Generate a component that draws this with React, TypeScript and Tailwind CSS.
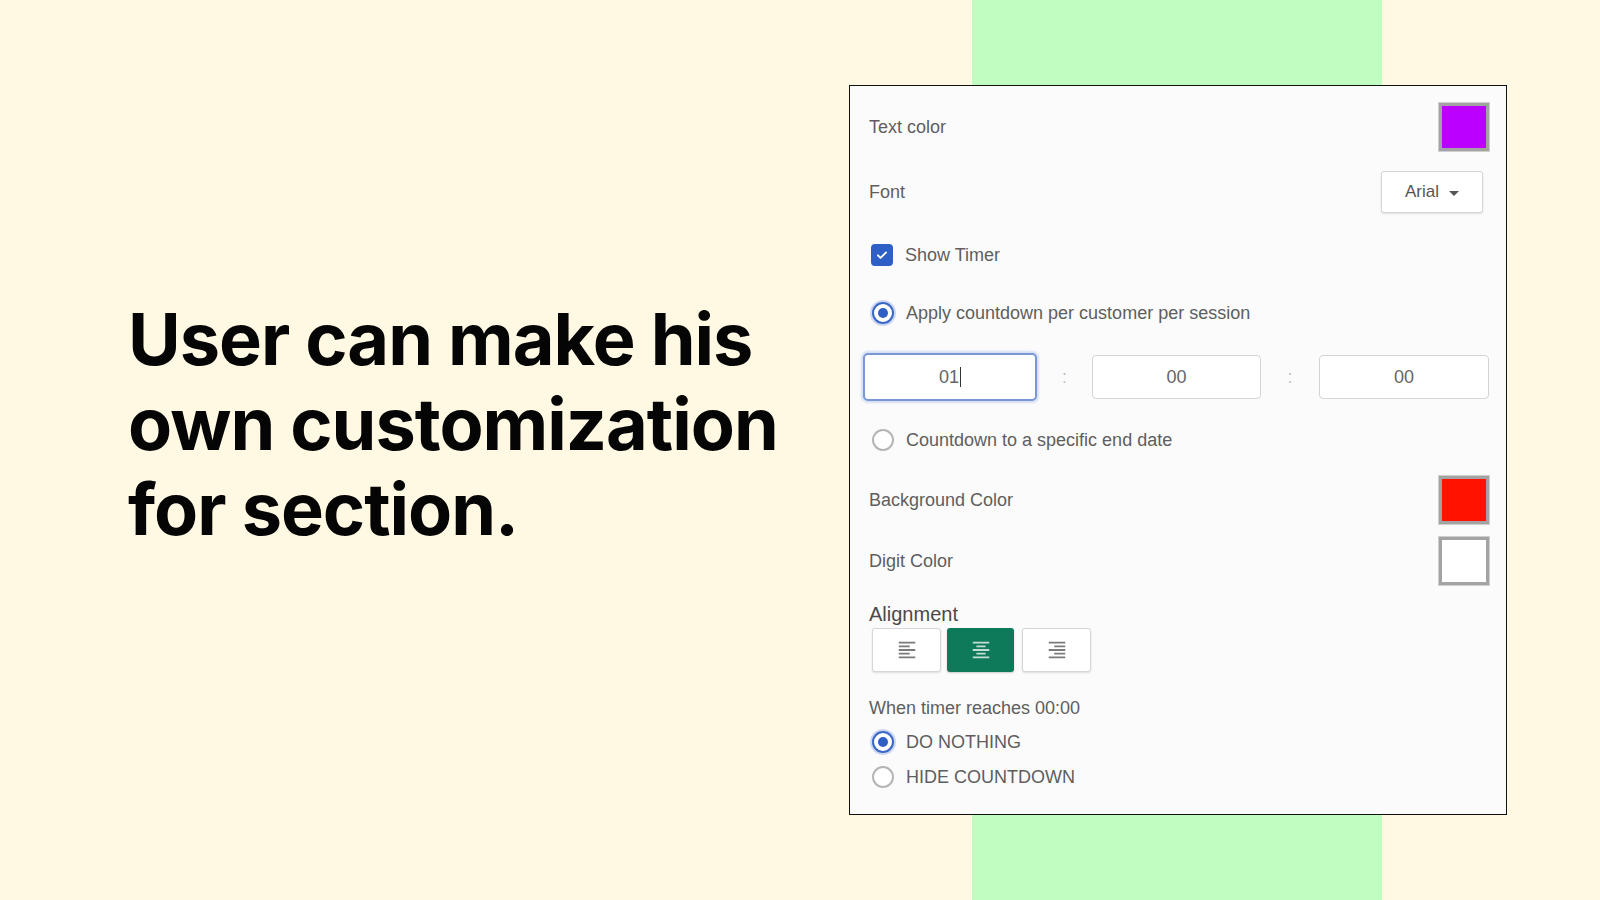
import React from "react";

const sans = "font-['Liberation_Sans',Arial,sans-serif]";

function Radio({ checked }: { checked?: boolean }) {
  if (checked) {
    return (
      <span className="flex h-[22px] w-[22px] shrink-0 items-center justify-center rounded-full border-2 border-[#3a68c8] bg-white shadow-[0_0_0_2px_rgba(120,150,220,0.35)]">
        <span className="h-[10px] w-[10px] rounded-full bg-[#2f5fc4]" />
      </span>
    );
  }
  return <span className="h-[22px] w-[22px] shrink-0 rounded-full border-2 border-[#b5b5b5] bg-white" />;
}

function Swatch({ color }: { color: string }) {
  return (
    <div className="h-[48px] w-[50px] border-[3px] border-[#a3a3a3] shadow-[0_0_0_1px_#cfcfcf]" style={{ backgroundColor: color }} />
  );
}

function AlignIcon({ d, color }: { d: string; color: string }) {
  return (
    <svg width="22" height="22" viewBox="0 0 24 24" fill={color}>
      <path d={d} />
    </svg>
  );
}

const LEFT = "M15 15H3v2h12v-2zm0-8H3v2h12V7zM3 13h18v-2H3v2zm0 8h18v-2H3v2zM3 3v2h18V3H3z";
const CENTER = "M7 15v2h10v-2H7zm-4 6h18v-2H3v2zm0-8h18v-2H3v2zm4-6v2h10V7H7zM3 3v2h18V3H3z";
const RIGHT = "M3 21h18v-2H3v2zm6-4h12v-2H9v2zm-6-4h18v-2H3v2zm6-4h12V7H9v2zM3 3v2h18V3H3z";

export default function App() {
  return (
    <div className="flex h-[900px] w-[1600px] overflow-hidden bg-[linear-gradient(90deg,#fff8e3_972px,#c1fdc0_972px,#c1fdc0_1382px,#fff8e3_1382px)]">
      <div className="w-[849px] shrink-0 pl-[128px] pt-[296px]">
        <h1 className="font-['Inter',sans-serif] text-[72px] font-bold leading-[85px] tracking-[-1px] text-[#050505]">
          User can make his
          <br />
          own customization
          <br />
          for section.
        </h1>
      </div>

      <div className={`mt-[85px] flex h-[730px] w-[658px] shrink-0 flex-col border border-[#111] bg-[#fbfbfb] pl-[19px] pr-[17px] pt-[17px] text-[18px] text-[#5e5e5e] ${sans}`}>
        {/* Text color */}
        <div className="flex h-[48px] items-center justify-between">
          <span>Text color</span>
          <Swatch color="#bb00ff" />
        </div>
        {/* Font */}
        <div className="mt-[20px] flex h-[42px] items-center justify-between">
          <span>Font</span>
          <div className="mr-[6px] flex h-[42px] w-[102px] items-center justify-center gap-[10px] rounded-[3px] border border-[#d6d6d6] bg-white text-[17px] text-[#555] shadow-[0_1px_2px_rgba(0,0,0,0.12)]">
            <span>Arial</span>
            <span className="mt-[2px] h-0 w-0 border-x-[5px] border-t-[5px] border-x-transparent border-t-[#555]" />
          </div>
        </div>
        {/* Show timer */}
        <div className="mt-[31px] flex h-[22px] items-center gap-[12px]">
          <span className="ml-[2px] flex h-[22px] w-[22px] items-center justify-center rounded-[4px] bg-[#2d5fc6]">
            <svg width="14" height="14" viewBox="0 0 24 24" fill="none" stroke="white" strokeWidth="3.2" strokeLinecap="round" strokeLinejoin="round">
              <path d="M5 12.5l4.5 4.5L19 7.5" />
            </svg>
          </span>
          <span>Show Timer</span>
        </div>
        {/* Radio 1 */}
        <div className="mt-[36px] flex h-[22px] items-center gap-[12px] pl-[3px]">
          <Radio checked />
          <span>Apply countdown per customer per session</span>
        </div>
        {/* Inputs */}
        <div className="ml-[-6px] mt-[29px] flex h-[48px] items-center">
          <div className="flex h-[48px] w-[174px] items-center justify-center rounded-[5px] border-2 border-[#7a98d6] bg-white text-[#666] shadow-[0_0_2px_2px_rgba(140,170,225,0.35)]">
            <span>01</span>
            <span className="ml-[1px] h-[20px] w-[1px] bg-[#333]" />
          </div>
          <span className="w-[55px] text-center text-[#c2c2c2]">:</span>
          <div className="flex h-[44px] w-[169px] items-center justify-center rounded-[4px] border border-[#d4d4d4] bg-white text-[#666]">00</div>
          <span className="w-[58px] text-center text-[#c2c2c2]">:</span>
          <div className="flex h-[44px] w-[170px] items-center justify-center rounded-[4px] border border-[#d4d4d4] bg-white text-[#666]">00</div>
        </div>
        {/* Radio 2 */}
        <div className="mt-[28px] flex h-[22px] items-center gap-[12px] pl-[3px]">
          <Radio />
          <span>Countdown to a specific end date</span>
        </div>
        {/* Background color */}
        <div className="mt-[25px] flex h-[48px] items-center justify-between">
          <span>Background Color</span>
          <Swatch color="#ff1200" />
        </div>
        {/* Digit color */}
        <div className="mt-[13px] flex h-[48px] items-center justify-between">
          <span>Digit Color</span>
          <Swatch color="#ffffff" />
        </div>
        {/* Alignment */}
        <div className="mt-[17px] flex h-[24px] items-center text-[20px] text-[#4a4a4a]">Alignment</div>
        <div className="mt-[2px] flex h-[44px] items-center gap-[6px] pl-[3px]">
          <div className="flex h-[44px] w-[69px] items-center justify-center rounded-[3px] border border-[#d6d6d6] bg-white shadow-[0_1px_2px_rgba(0,0,0,0.12)]">
            <AlignIcon d={LEFT} color="#7a7a7a" />
          </div>
          <div className="flex h-[44px] w-[67px] items-center justify-center rounded-[3px] bg-[#0f7a5a] shadow-[0_1px_2px_rgba(0,0,0,0.2)]">
            <AlignIcon d={CENTER} color="#c4ddd4" />
          </div>
          <div className="ml-[2px] flex h-[44px] w-[69px] items-center justify-center rounded-[3px] border border-[#d6d6d6] bg-white shadow-[0_1px_2px_rgba(0,0,0,0.12)]">
            <AlignIcon d={RIGHT} color="#7a7a7a" />
          </div>
        </div>
        {/* When timer */}
        <div className="mt-[25px] flex h-[22px] items-center text-[18px]">When timer reaches 00:00</div>
        <div className="mt-[12px] flex h-[22px] items-center gap-[12px] pl-[3px]">
          <Radio checked />
          <span>DO NOTHING</span>
        </div>
        <div className="mt-[13px] flex h-[22px] items-center gap-[12px] pl-[3px]">
          <Radio />
          <span>HIDE COUNTDOWN</span>
        </div>
      </div>
    </div>
  );
}
